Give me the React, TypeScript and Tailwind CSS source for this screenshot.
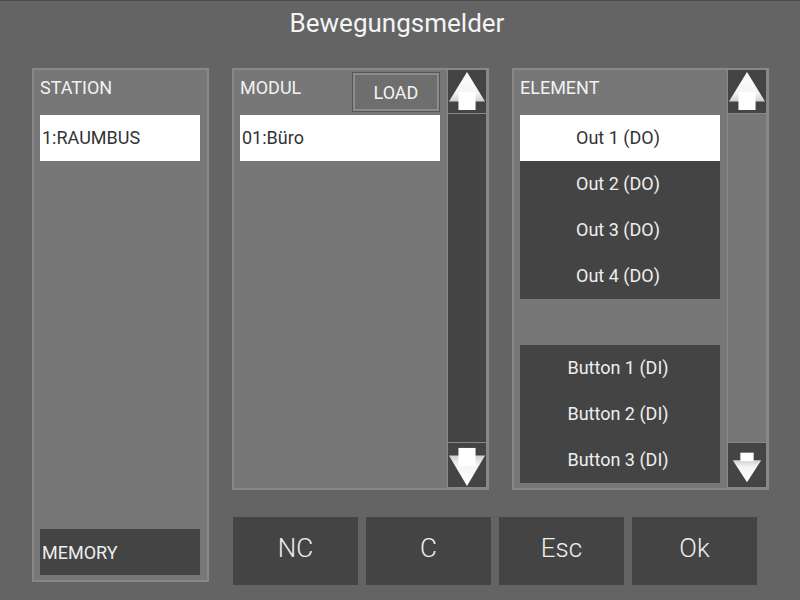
import React from "react";

const font = { fontFamily: "Roboto, 'Liberation Sans', sans-serif" };

const ArrowUp = () => (
  <svg width="40" height="45" viewBox="0 0 40 45">
    <defs>
      <linearGradient id="gu" x1="0" y1="0" x2="0" y2="1">
        <stop offset="0" stopColor="#ffffff" />
        <stop offset="0.7" stopColor="#f4f4f4" />
        <stop offset="1" stopColor="#cfcfcf" />
      </linearGradient>
    </defs>
    <polygon points="20,2 39,33 1,33" fill="url(#gu)" />
    <rect x="11" y="23" width="18" height="19" fill="#ffffff" />
  </svg>
);

const ArrowDown = () => (
  <svg width="40" height="45" viewBox="0 0 40 45">
    <defs>
      <linearGradient id="gd" x1="0" y1="1" x2="0" y2="0">
        <stop offset="0" stopColor="#ffffff" />
        <stop offset="0.7" stopColor="#f4f4f4" />
        <stop offset="1" stopColor="#cfcfcf" />
      </linearGradient>
    </defs>
    <polygon points="1,12 39,12 20,44" fill="url(#gd)" />
    <rect x="11" y="4" width="18" height="19" fill="#ffffff" />
  </svg>
);

const ArrowDownSmall = () => (
  <svg width="40" height="45" viewBox="0 0 40 45">
    <defs>
      <linearGradient id="gs" x1="0" y1="1" x2="0" y2="0">
        <stop offset="0" stopColor="#ffffff" />
        <stop offset="0.7" stopColor="#f4f4f4" />
        <stop offset="1" stopColor="#cfcfcf" />
      </linearGradient>
    </defs>
    <polygon points="5,17 35,17 20,40" fill="url(#gs)" />
    <rect x="13" y="9" width="14" height="9" fill="#ffffff" />
  </svg>
);

const Item = ({ label, active, center }: { label: string; active?: boolean; center?: boolean }) => (
  <div
    className={`h-[46px] w-[200px] flex items-center text-[18px] pb-[1px] ${center ? "justify-center pr-[4px]" : "pl-[2px]"} ${
      active ? "bg-white text-[#333]" : "bg-[#444] text-[#eee]"
    }`}
  >
    {label}
  </div>
);

export default function App() {
  return (
    <div className="w-[800px] h-[600px] bg-[#646464] border-t border-[#4c4c4c] overflow-hidden" style={font}>
      <div className="h-[67px] flex justify-center pt-[6px]">
        <h1 className="text-[26px] leading-[32px] text-[#f4f4f4] -ml-[6px]">Bewegungsmelder</h1>
      </div>

      <div className="flex gap-[23px] pl-[32px]">
        {/* station */}
        <div className="w-[177px] h-[514px] bg-[#777] border-2 border-[#888] flex flex-col pl-[6px]">
          <div className="h-[45px] pt-[8px] leading-[20px] text-[18px] text-[#f2f2f2]">STATION</div>
          <div className="h-[46px] w-[160px] bg-white text-[#333] flex items-center pl-[2px] pb-[1px] text-[18px]">1:RAUMBUS</div>
          <div className="flex-1" />
          <div className="h-[46px] w-[160px] bg-[#444] text-[#eee] flex items-center pl-[2px] text-[18px] mb-[5px]">MEMORY</div>
        </div>

        <div className="flex flex-col">
          <div className="flex gap-[23px]">
            {/* modul */}
            <div className="w-[257px] h-[422px] bg-[#777] border-2 border-[#888] flex pl-[6px]">
              <div className="w-[200px] flex flex-col">
                <div className="h-[45px] flex justify-between">
                  <span className="pt-[8px] leading-[20px] text-[18px] text-[#f2f2f2]">MODUL</span>
                  <button className="mt-[2px] w-[88px] h-[40px] bg-[#6e6e6e] border border-[#555] shadow-[inset_0_0_0_2px_#8c8c8c] text-[18px] text-[#f4f4f4] flex items-center justify-center">
                    LOAD
                  </button>
                </div>
                <Item label="01:Büro" active />
              </div>
              <div className="ml-[7px] w-[40px] flex flex-col">
                <div className="h-[45px] bg-[#444] border border-[#888] flex items-center justify-center -mt-[1px]">
                  <ArrowUp />
                </div>
                <div className="flex-1 bg-[#444] border-x border-[#888]" />
                <div className="h-[46px] bg-[#444] border border-[#888] flex items-center justify-center">
                  <ArrowDown />
                </div>
              </div>
            </div>

            {/* element */}
            <div className="w-[257px] h-[422px] bg-[#777] border-2 border-[#888] flex pl-[6px]">
              <div className="w-[200px] flex flex-col">
                <div className="h-[45px] pt-[8px] leading-[20px] text-[18px] text-[#f2f2f2]">ELEMENT</div>
                <Item label="Out 1 (DO)" active center />
                <Item label="Out 2 (DO)" center />
                <Item label="Out 3 (DO)" center />
                <Item label="Out 4 (DO)" center />
                <div className="h-[46px]" />
                <Item label="Button 1 (DI)" center />
                <Item label="Button 2 (DI)" center />
                <Item label="Button 3 (DI)" center />
              </div>
              <div className="ml-[7px] w-[40px] flex flex-col">
                <div className="h-[45px] bg-[#444] border border-[#888] flex items-center justify-center -mt-[1px]">
                  <ArrowUp />
                </div>
                <div className="flex-1 bg-[#777] border-x border-[#888]" />
                <div className="h-[46px] bg-[#444] border border-[#888] flex items-center justify-center">
                  <ArrowDownSmall />
                </div>
              </div>
            </div>
          </div>

          <div className="flex gap-[8px] mt-[27px] ml-[1px]">
            {["NC", "C", "Esc", "Ok"].map((b) => (
              <button key={b} className="w-[125px] h-[68px] bg-[#444] text-[#eee] text-[26px] font-light flex items-center justify-center pb-[5px]">
                {b}
              </button>
            ))}
          </div>
        </div>
      </div>
    </div>
  );
}
